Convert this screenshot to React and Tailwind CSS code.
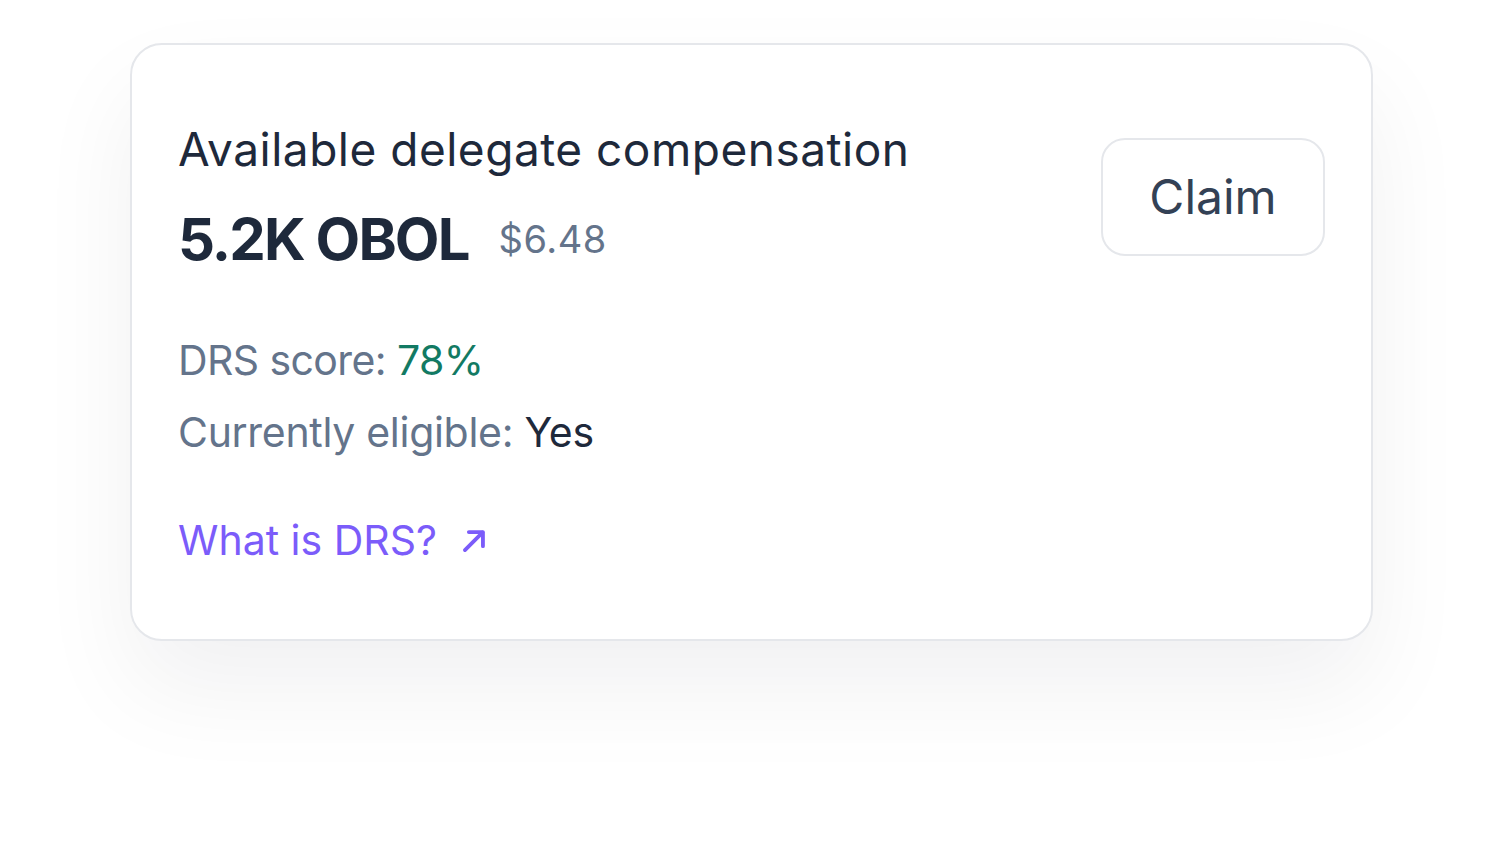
export default function App() {
  return (
    <div className="min-h-screen w-full bg-white pt-[43px] pl-[130px]" style={{ fontFamily: "Inter, 'Noto Sans', sans-serif" }}>
      <div className="w-[1243px] h-[598px] rounded-[32px] border-2 border-[#e5e7eb] bg-white shadow-[0_48px_100px_0_rgba(17,24,39,0.06)] pl-[46px] pr-[46px] pt-[76px] flex flex-col">
        <div className="flex items-center justify-between">
          <div className="flex flex-col">
            <div className="text-[46px] leading-[56px] text-[#1e293b] tracking-[0.5px]">Available delegate compensation</div>
            <div className="mt-[30px] flex items-center gap-[30px]">
              <span className="text-[58px] leading-[64px] font-bold text-[#1e293b] tracking-[-1.9px]">5.2K OBOL</span>
              <span className="text-[38px] leading-[48px] text-[#64748b] tracking-[0.5px]">$6.48</span>
            </div>
          </div>
          <button className="w-[224px] h-[118px] rounded-[24px] border-2 border-[#e5e7eb] bg-white text-[48px] text-[#334155] flex items-center justify-center mt-[2px]">
            Claim
          </button>
        </div>
        <div className="mt-[63px] flex flex-col gap-[20px]">
          <div className="text-[41px] leading-[52px] text-[#64748b] tracking-[-0.6px]">
            DRS score: <span className="text-[#127a63]">78%</span>
          </div>
          <div className="text-[41px] leading-[52px] text-[#64748b] tracking-[-0.3px]">
            Currently eligible: <span className="text-[#1e293b]">Yes</span>
          </div>
        </div>
        <a className="mt-[56px] flex items-center gap-[24px] text-[41px] leading-[52px] text-[#7b5cfa]">
          <span>What is DRS?</span>
          <svg width="27" height="27" viewBox="0 0 24 24" fill="none" stroke="currentColor" strokeWidth="3.4" strokeLinecap="round" strokeLinejoin="round">
            <path d="M3.5 20.5 L19 5" />
            <path d="M7 4.5 H19.5 V17" />
          </svg>
        </a>
      </div>
    </div>
  );
}
